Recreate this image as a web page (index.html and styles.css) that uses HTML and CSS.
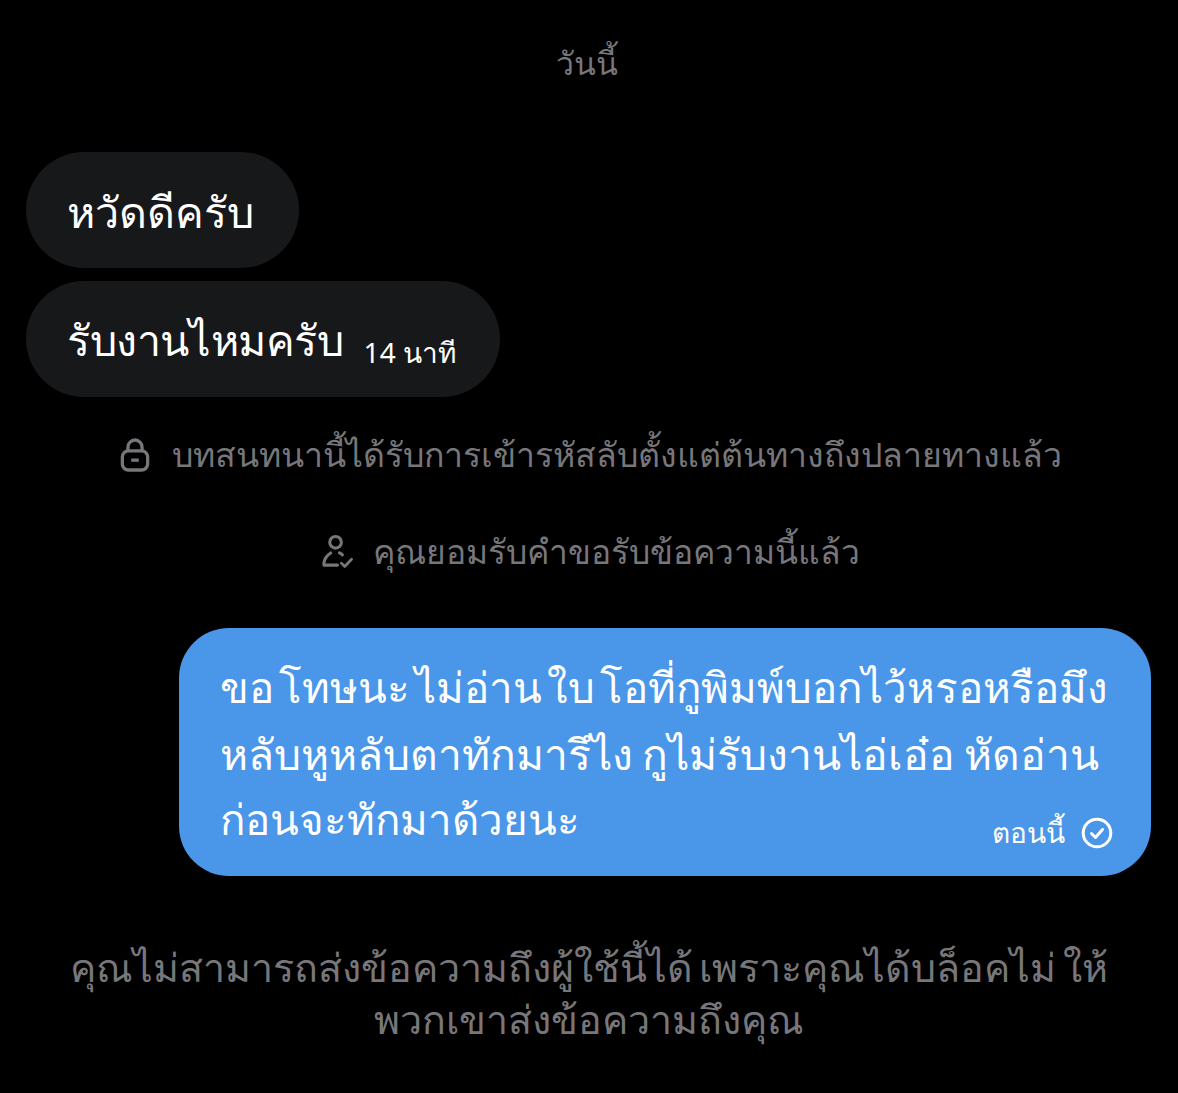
FILE: index.html
```html
<!DOCTYPE html>
<html lang="th">
<head>
<meta charset="utf-8">
<title>แชท</title>
<link rel="stylesheet" href="styles.css">
</head>
<body>
<main class="chat">
  <div class="date">วันนี้</div>
  <div class="incoming-group">
    <div class="bubble in first">หวัดดีครับ</div>
    <div class="bubble in second">รับงานไหมครับ<span class="age">14 นาที</span></div>
  </div>
  <div class="notice lock">
    <svg class="ico-lock" viewBox="0 0 32 36" width="30" height="36" fill="none" stroke="#77777b" stroke-width="3.500"><path d="M8.500 14V9.500a7.500 7.500 0 0 1 15 0V14"/><rect x="2.500" y="13.500" width="27" height="20.500" rx="6.500"/><path d="M12 23.500h8"/></svg>
    <span>บทสนทนานี้ได้รับการเข้ารหัสลับตั้งแต่ต้นทางถึงปลายทางแล้ว</span>
  </div>
  <div class="notice accept">
    <svg class="ico-user" viewBox="0 0 32 36" width="31" height="36" fill="none" stroke="#77777b" stroke-width="3.200" stroke-linecap="round" stroke-linejoin="round"><circle cx="14" cy="8" r="6"/><path d="M9 19c-4 2.500-6.500 6-7 10.500v2h14"/><path d="M18 19c1 .5 2 1 3 2"/><path d="M20 29.500l3.500 3.500 7-7.500" stroke-width="2.800"/></svg>
    <span>คุณยอมรับคำขอรับข้อความนี้แล้ว</span>
  </div>
  <div class="bubble out">
    <p class="out-text">
      <span class="line tight">ขอ โทษนะ ไม่อ่าน ใบ โอที่กูพิมพ์บอกไว้หรอหรือมึง</span>
      <span class="line wide">หลับหูหลับตาทักมารึไง กูไม่รับงานไอ่เอ๋อ หัดอ่าน</span>
      <span class="line tight">ก่อนจะทักมาด้วยนะ</span>
    </p>
    <div class="status">
      <span>ตอนนี้</span>
      <svg viewBox="0 0 32 32" width="32" height="32" fill="none" stroke="#fff" stroke-linecap="round" stroke-linejoin="round"><circle cx="16" cy="16" r="13.800" stroke-width="3"/><path d="M10.500 16.500l4 4 7-8" stroke-width="3"/></svg>
    </div>
  </div>
  <p class="blocked">คุณไม่สามารถส่งข้อความถึงผู้ใช้นี้ได้ เพราะคุณได้บล็อคไม่ ให้<br>พวกเขาส่งข้อความถึงคุณ</p>
</main>
</body>
</html>
```
FILE: styles.css
```css
* { box-sizing: border-box; }
html, body { margin: 0; background: #000; }
body { font-family: "Noto Sans", "Liberation Sans", sans-serif; overflow: hidden; }
.chat { width: 1178px; height: 1093px; display: flex; flex-direction: column; padding: 0 26px; }
.date { height: 152px; padding: 39px 4px 0 0; line-height: 48px; text-align: center; font-size: 32px; color: #77777b; }
.incoming-group { display: flex; flex-direction: column; align-items: flex-start; gap: 13px; }
.bubble.in { height: 116px; border-radius: 58px; background: #17181a; color: #fff; display: flex; align-items: center; padding: 5px 45px 0 41px; font-size: 43px; }
.bubble.second { padding: 3px 44px 0 41px; letter-spacing: -0.4px; }
.age { font-size: 28px; margin-left: 20px; margin-top: 25px; letter-spacing: 0; }
.notice { display: flex; align-items: center; justify-content: center; color: #77777b; }
.lock { margin-top: 34px; height: 48px; gap: 22px; padding-left: 4px; font-size: 33.850px; }
.accept { margin-top: 49px; height: 48px; gap: 20px; padding-left: 4px; font-size: 33.600px; }
.bubble.out { margin-top: 52px; margin-left: 153px; width: 972px; height: 248px; border-radius: 50px; background: #4a96e8; color: #fff; padding: 26px 0 0 41px; position: relative; }
.out-text { margin: 0; line-height: 66px; white-space: nowrap; }
.line { display: block; }
.line.tight { font-size: 42.100px; word-spacing: -6px; }
.line.wide { font-size: 42.600px; word-spacing: -2px; }
.status { position: absolute; right: 38px; bottom: 21px; display: flex; align-items: center; gap: 16px; font-size: 28px; }
.blocked { margin: 65px 0 0; text-align: center; color: #77777b; font-size: 39.400px; line-height: 52px; word-spacing: -4px; }
```
